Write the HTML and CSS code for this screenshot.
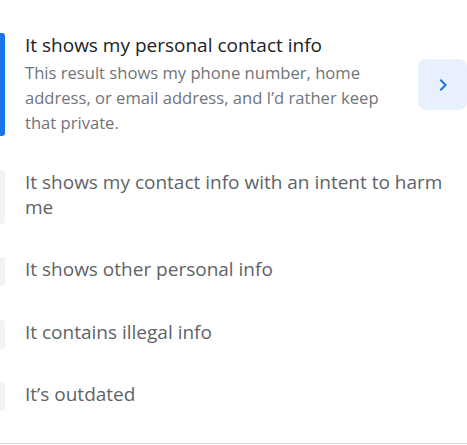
FILE: index.html
```html
<!DOCTYPE html>
<html lang="en">
<head>
<meta charset="utf-8">
<title>Reasons</title>
<link rel="stylesheet" href="styles.css">
</head>
<body>
<div class="list">
  <div class="item selected">
    <div class="bar"></div>
    <div class="content">
      <div class="title">It shows my personal contact info</div>
      <div class="desc">This result shows my phone number, home address, or email address, and I’d rather keep that private.</div>
    </div>
    <button class="next" aria-label="Next">
      <svg width="24" height="24" viewBox="0 0 24 24"><path d="M8.59 16.59 13.17 12 8.59 7.41 10 6l6 6-6 6z" fill="#1a73e8"/></svg>
    </button>
  </div>
  <div class="item">
    <div class="bar"></div>
    <div class="content"><div class="label">It shows my contact info with an intent to harm me</div></div>
  </div>
  <div class="item">
    <div class="bar"></div>
    <div class="content"><div class="label">It shows other personal info</div></div>
  </div>
  <div class="item">
    <div class="bar"></div>
    <div class="content"><div class="label">It contains illegal info</div></div>
  </div>
  <div class="item">
    <div class="bar"></div>
    <div class="content"><div class="label">It’s outdated</div></div>
  </div>
</div>
<div class="divider"></div>
</body>
</html>
```
FILE: styles.css
```css
html, body {
  margin: 0;
  padding: 0;
  background: #ffffff;
}
body {
  font-family: "Open Sans", "Noto Sans", sans-serif;
  width: 467px;
  height: 445px;
  overflow: hidden;
}
.list {
  display: flex;
  flex-direction: column;
  gap: 33.5px;
  padding-top: 33px;
}
.item {
  display: flex;
  align-items: stretch;
}
.bar {
  width: 5px;
  flex: 0 0 5px;
  background: #f1f3f4;
  border-radius: 0 3px 3px 0;
}
.selected .bar {
  background: #1a73e8;
}
.content {
  flex: 1;
  padding: 0 0 4px 20px;
  max-width: 426px;
}
.selected .content {
  max-width: 368px;
  padding-bottom: 1px;
}
.title {
  font-size: 19px;
  line-height: 25px;
  color: #202124;
}
.desc {
  margin-top: 2px;
  font-size: 16.6px;
  line-height: 25px;
  color: #70757a;
}
.label {
  font-size: 19px;
  line-height: 25px;
  color: #5f6368;
}
.next {
  align-self: center;
  margin-left: auto;
  width: 49px;
  height: 51px;
  border: none;
  border-radius: 8px;
  background: #e8f0fe;
  display: flex;
  align-items: center;
  justify-content: center;
  padding: 0;
}
.divider {
  margin-top: 32px;
  height: 1px;
  background: #dadce0;
}
```
